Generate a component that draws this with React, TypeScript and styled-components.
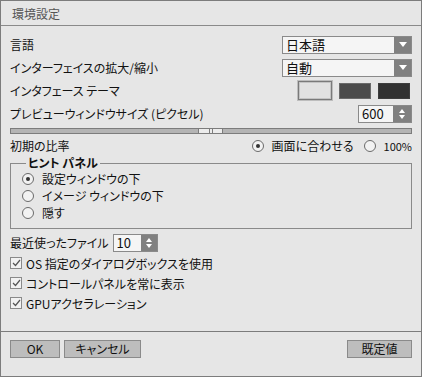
import React, { FC } from 'react';
import styled, { createGlobalStyle } from 'styled-components';

const GlobalStyle = createGlobalStyle`
  body {
    margin: 0;
    font-family: "Noto Sans CJK JP", "Liberation Sans", sans-serif;
    font-size: 12px;
    font-feature-settings: "palt";
    color: #111;
    background: #e6e6e6;
  }
`;

const Window = styled.div`
  width: 422px;
  height: 377px;
  box-sizing: border-box;
  border: 1px solid #7c7c7c;
  background: #e6e6e6;
  display: flex;
  flex-direction: column;
`;

const TitleBar = styled.div`
  height: 24px;
  border-bottom: 1px solid #8a8a8a;
  display: flex;
  align-items: center;
  padding-left: 11px;
  color: #555;
  font-size: 12px;
`;

const Body = styled.div`
  flex: 1;
  padding: 0 9px;
  display: flex;
  flex-direction: column;
`;

const Row = styled.div<{ $h: number; $mt?: number }>`
  display: flex;
  align-items: center;
  justify-content: space-between;
  height: ${(p) => p.$h}px;
  margin-top: ${(p) => p.$mt || 0}px;
  white-space: nowrap;
`;

const Label = styled.span`
  line-height: 14px;
`;

const Select = styled.div`
  width: 130px;
  height: 18px;
  box-sizing: border-box;
  border: 1px solid #8a8a8a;
  background: #f5f5f5;
  display: flex;
  align-items: center;
`;

const SelectText = styled.span`
  flex: 1;
  padding-left: 3px;
  font-size: 13px;
  line-height: 16px;
`;

const ArrowBlock = styled.div<{ $w?: number }>`
  width: ${(p) => p.$w || 17}px;
  align-self: stretch;
  background: #808080;
  display: flex;
  flex-direction: column;
  align-items: center;
  justify-content: center;
  gap: 2px;
`;

const Spinner = styled.div<{ $w: number }>`
  width: ${(p) => p.$w}px;
  height: 18px;
  box-sizing: border-box;
  border: 1px solid #8a8a8a;
  background: #f5f5f5;
  display: flex;
  align-items: center;
`;

const Swatches = styled.div`
  display: flex;
  align-items: center;
  gap: 7px;
  margin-right: 2px;
`;

const Swatch = styled.div<{ $fill: string; $edge: string; $sel?: boolean }>`
  width: ${(p) => (p.$sel ? 34 : 32)}px;
  height: ${(p) => (p.$sel ? 19 : 16)}px;
  box-sizing: border-box;
  background: ${(p) => p.$fill};
  border: 1px solid ${(p) => p.$edge};
  box-shadow: ${(p) => (p.$sel ? 'inset 0 0 0 1px #c4c4c4' : 'none')};
  outline: ${(p) => (p.$sel ? '1px solid #bdbdbd' : 'none')};
`;

const Track = styled.div`
  margin-top: 3px;
  height: 6px;
  box-sizing: border-box;
  border: 1px solid #7c7c7c;
  background: #b4b4b4;
  display: flex;
  align-items: stretch;
`;

const TrackFill = styled.div`
  width: 187px;
`;

const Thumb = styled.div`
  width: 25px;
  margin: -1px 0;
  box-sizing: border-box;
  border: 1px solid #7c7c7c;
  background: #ececec;
  display: flex;
  justify-content: center;
  gap: 2px;
`;

const Grip = styled.div`
  width: 1px;
  background: #7c7c7c;
`;

const RadioGroup = styled.div`
  display: flex;
  align-items: center;
  gap: 10px;
`;

const RadioItem = styled.label`
  display: flex;
  align-items: center;
  gap: 8px;
  line-height: 14px;
`;

const RadioCircle = styled.span<{ $on?: boolean }>`
  width: 12px;
  height: 12px;
  box-sizing: border-box;
  border-radius: 50%;
  border: 1px solid #6a6a6a;
  background: #f2f2f2;
  display: flex;
  align-items: center;
  justify-content: center;
  &::after {
    content: '';
    width: 4px;
    height: 4px;
    border-radius: 50%;
    background: ${(p) => (p.$on ? '#333' : 'transparent')};
  }
`;

const Small = styled.span`
  font-size: 11px;
`;

const Group = styled.fieldset`
  margin: 1px 0 0;
  padding: 0 0 7px 11px;
  border: 1px solid #8a8a8a;
  min-width: 0;
`;

const Legend = styled.legend`
  margin-left: 4px;
  padding: 0 2px;
  font-weight: bold;
  line-height: 14px;
`;

const GroupRow = styled.div`
  height: 17px;
  display: flex;
  align-items: center;
`;

const FileRow = styled.div`
  display: flex;
  align-items: center;
  gap: 4px;
  height: 20px;
  margin-top: 4px;
`;

const CheckRow = styled.label`
  height: 20px;
  display: flex;
  align-items: center;
  gap: 4px;
`;

const CheckBox = styled.span`
  width: 12px;
  height: 12px;
  box-sizing: border-box;
  border: 1px solid #8a8a8a;
  background: #f2f2f2;
  display: flex;
  align-items: center;
  justify-content: center;
`;

const Footer = styled.div`
  height: 36px;
  border-top: 1px solid #7c7c7c;
  padding: 8px 9px 0;
  display: flex;
  gap: 4px;
`;

const Button = styled.button<{ $w: number }>`
  width: ${(p) => p.$w}px;
  height: 18px;
  box-sizing: border-box;
  border: 1px solid #8a8a8a;
  background: #bdbdbd;
  font-family: inherit;
  font-size: 12px;
  font-feature-settings: "palt";
  color: #111;
  padding: 0;
  line-height: 14px;
  &:last-child {
    margin-left: auto;
  }
`;

const Down: FC = () => (
  <svg width="8" height="5" viewBox="0 0 8 5">
    <polygon points="0,0 8,0 4,5" fill="#fff" />
  </svg>
);

const UpDown: FC = () => (
  <>
    <svg width="6" height="4" viewBox="0 0 6 4">
      <polygon points="0,4 6,4 3,0" fill="#fff" />
    </svg>
    <svg width="6" height="4" viewBox="0 0 6 4">
      <polygon points="0,0 6,0 3,4" fill="#fff" />
    </svg>
  </>
);

const Check: FC = () => (
  <svg width="9" height="8" viewBox="0 0 9 8">
    <polyline points="1,4 3.5,6.5 8,1" fill="none" stroke="#555" strokeWidth="1.2" />
  </svg>
);

const checks = ['OS 指定のダイアログボックスを使用', 'コントロールパネルを常に表示', 'GPUアクセラレーション'];

export default function App() {
  return (
    <>
      <GlobalStyle />
      <Window>
        <TitleBar>環境設定</TitleBar>
        <Body>
          <Row $h={23} $mt={7}>
            <Label>言語</Label>
            <Select>
              <SelectText>日本語</SelectText>
              <ArrowBlock><Down /></ArrowBlock>
            </Select>
          </Row>
          <Row $h={23}>
            <Label>インターフェイスの拡大/縮小</Label>
            <Select>
              <SelectText>自動</SelectText>
              <ArrowBlock><Down /></ArrowBlock>
            </Select>
          </Row>
          <Row $h={23}>
            <Label>インタフェース テーマ</Label>
            <Swatches>
              <Swatch $fill="#e2e2e2" $edge="#7a7a7a" $sel />
              <Swatch $fill="#4b4b4b" $edge="#6a6a6a" />
              <Swatch $fill="#323232" $edge="#3e3e3e" />
            </Swatches>
          </Row>
          <Row $h={23}>
            <Label>プレビューウィンドウサイズ (ピクセル)</Label>
            <Spinner $w={54}>
              <SelectText>600</SelectText>
              <ArrowBlock $w={18}><UpDown /></ArrowBlock>
            </Spinner>
          </Row>
          <Track>
            <TrackFill />
            <Thumb><Grip /><Grip /></Thumb>
          </Track>
          <Row $h={18} $mt={3}>
            <Label>初期の比率</Label>
            <RadioGroup>
              <RadioItem><RadioCircle $on />画面に合わせる</RadioItem>
              <RadioItem><RadioCircle /><Small>100%</Small></RadioItem>
            </RadioGroup>
          </Row>
          <Group>
            <Legend>ヒント パネル</Legend>
            <GroupRow><RadioItem><RadioCircle $on />設定ウィンドウの下</RadioItem></GroupRow>
            <GroupRow><RadioItem><RadioCircle />イメージ ウィンドウの下</RadioItem></GroupRow>
            <GroupRow><RadioItem><RadioCircle />隠す</RadioItem></GroupRow>
          </Group>
          <FileRow>
            <Label>最近使ったファイル</Label>
            <Spinner $w={45}>
              <SelectText>10</SelectText>
              <ArrowBlock $w={16}><UpDown /></ArrowBlock>
            </Spinner>
          </FileRow>
          {checks.map((c) => (
            <CheckRow key={c}>
              <CheckBox><Check /></CheckBox>
              {c}
            </CheckRow>
          ))}
        </Body>
        <Footer>
          <Button $w={50}>OK</Button>
          <Button $w={77}>キャンセル</Button>
          <Button $w={65}>既定値</Button>
        </Footer>
      </Window>
    </>
  );
}
